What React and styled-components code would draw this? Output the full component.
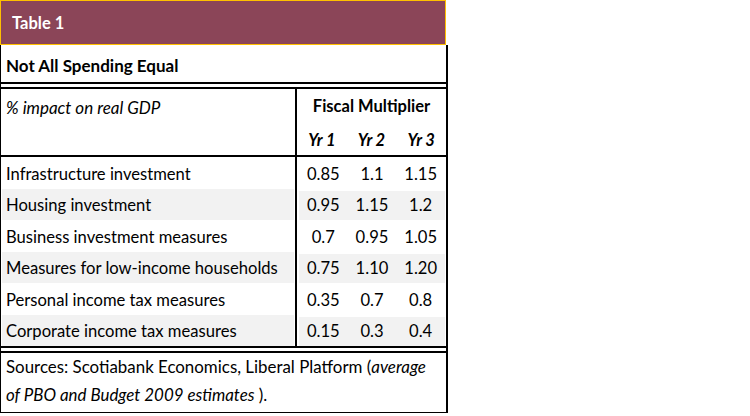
import React from "react";
import styled, { createGlobalStyle } from "styled-components";

const Global = createGlobalStyle`
  html, body { margin: 0; padding: 0; background: #fff; }
  body { font-family: Lato, "Open Sans", sans-serif; color: #000; }
`;

const Wrap = styled.div`
  width: 448px;
`;

const Banner = styled.div`
  width: 446px;
  height: 45px;
  box-sizing: border-box;
  background: #8b4558;
  border: 1px solid #ffc000;
  color: #fff;
  font-weight: 700;
  font-size: 16.5px;
  display: flex;
  align-items: center;
  padding-left: 11px;
`;

const Card = styled.div`
  width: 448px;
  box-sizing: border-box;
  border-left: 1px solid #000;
  border-right: 2px solid #000;
  border-bottom: 1px solid #000;
`;

const Title = styled.div`
  height: 37px;
  box-sizing: border-box;
  padding: 4px 0 0 5px;
  display: flex;
  align-items: center;
  font-weight: 700;
  font-size: 17px;
`;

const DoubleRule = styled.div`
  height: 3px;
  border-top: 2px solid #000;
  border-bottom: 2px solid #000;
`;

const HeadRow = styled.div`
  display: flex;
  height: 68px;
  box-sizing: border-box;
  border-bottom: 2px solid #000;
`;

const HeadLabel = styled.div`
  width: 294px;
  box-sizing: border-box;
  padding: 8px 0 0 5px;
  font-style: italic;
  font-size: 17px;
`;

const HeadValues = styled.div`
  flex: 1;
  border-left: 2px solid #000;
  display: flex;
  flex-direction: column;
`;

const Multiplier = styled.div`
  height: 33px;
  display: flex;
  align-items: center;
  justify-content: center;
  font-weight: 700;
  font-size: 16.5px;
`;

const YearGrid = styled.div`
  flex: 1;
  display: grid;
  grid-template-columns: repeat(3, 1fr);
  align-items: center;
  font-weight: 700;
  font-style: italic;
  font-size: 16.5px;
  text-align: center;
  padding-top: 2px;
`;

const Row = styled.div`
  display: flex;
  height: 31.5px;
  font-size: 16.6px;
`;

const Label = styled.div`
  width: 292px;
  margin-left: 1px;
  margin-right: 1px;
  box-sizing: border-box;
  padding: 2px 0 0 4px;
  display: flex;
  align-items: center;
  background: ${(p) => (p.$shade ? "#f2f2f2" : "#fff")};
  white-space: nowrap;
`;

const Values = styled.div`
  flex: 1;
  border-left: 2px solid #000;
  padding: 2px 1px 0 2px;
  background: ${(p) => (p.$shade ? "#f2f2f2" : "#fff")};
  background-clip: content-box;
  display: grid;
  grid-template-columns: repeat(3, 1fr);
  align-items: center;
  text-align: center;
`;

const Footer = styled.div`
  padding: 0 0 3px 5px;
  font-size: 16.9px;
  line-height: 28px;
`;

const Line = styled.div`
  white-space: nowrap;
`;

const rows = [
  ["Infrastructure investment", "0.85", "1.1", "1.15"],
  ["Housing investment", "0.95", "1.15", "1.2"],
  ["Business investment measures", "0.7", "0.95", "1.05"],
  ["Measures for low-income households", "0.75", "1.10", "1.20"],
  ["Personal income tax measures", "0.35", "0.7", "0.8"],
  ["Corporate income tax measures", "0.15", "0.3", "0.4"],
];

export default function App() {
  return (
    <Wrap>
      <Global />
      <Banner>Table 1</Banner>
      <Card>
        <Title>Not All Spending Equal</Title>
        <DoubleRule />
        <HeadRow>
          <HeadLabel>% impact on real GDP</HeadLabel>
          <HeadValues>
            <Multiplier>Fiscal Multiplier</Multiplier>
            <YearGrid>
              <span>Yr 1</span>
              <span>Yr 2</span>
              <span>Yr 3</span>
            </YearGrid>
          </HeadValues>
        </HeadRow>
        {rows.map(([label, a, b, c], i) => (
          <Row key={label}>
            <Label $shade={i % 2 === 1}>{label}</Label>
            <Values $shade={i % 2 === 1}>
              <span>{a}</span>
              <span>{b}</span>
              <span>{c}</span>
            </Values>
          </Row>
        ))}
        <DoubleRule />
        <Footer>
          <Line>
            Sources: Scotiabank Economics, Liberal Platform (<i>average</i>
          </Line>
          <Line>
            <i>of PBO and Budget 2009 estimates</i> ).
          </Line>
        </Footer>
      </Card>
    </Wrap>
  );
}
